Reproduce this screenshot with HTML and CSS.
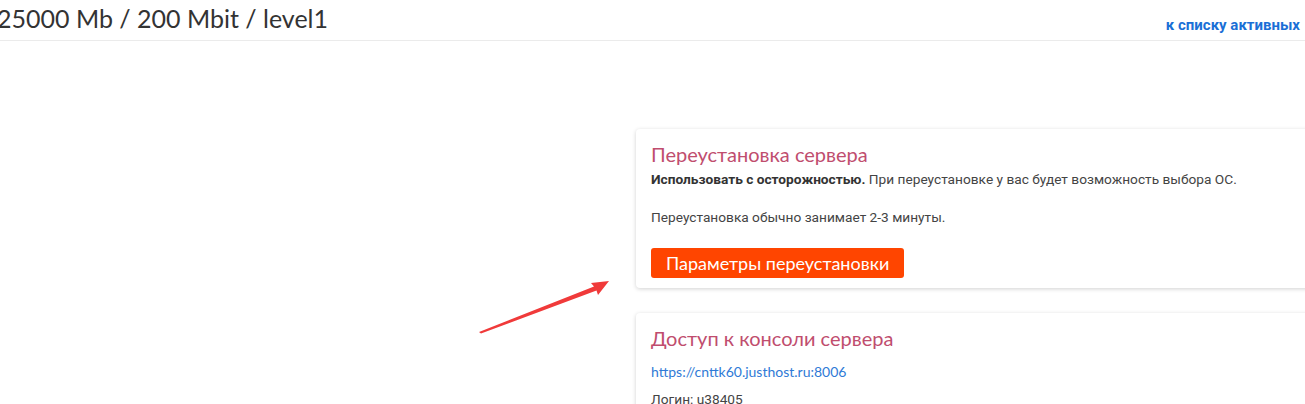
FILE: index.html
```html
<!DOCTYPE html>
<html lang="ru">
<head>
    <meta charset="UTF-8">
    <meta name="viewport" content="width=device-width, initial-scale=1.0">
    <title>25000 Mb / 200 Mbit / level1</title>
    <link rel="stylesheet" href="styles.css">
</head>
<body>
    <div class="page-header">
        <h1 class="page-title">25000 Mb / 200 Mbit / level1</h1>
        <a href="#" class="back-link">к списку активных</a>
    </div>

    <div class="content">
        <div class="side"></div>
        <div class="panels">
            <div class="panel">
                <h2 class="panel-title">Переустановка сервера</h2>
                <p class="panel-text"><b>Использовать с осторожностью.</b> При переустановке у вас будет возможность выбора ОС.<br><br>Переустановка обычно занимает 2-3 минуты.</p>
                <a href="#" class="btn-reinstall">Параметры переустановки</a>
            </div>
            <div class="panel">
                <h2 class="panel-title">Доступ к консоли сервера</h2>
                <a href="#" class="console-link">https://cnttk60.justhost.ru:8006</a>
                <p class="panel-text">Логин: u38405</p>
            </div>
        </div>
    </div>

    <!-- arrow drawn over the page -->
    <svg class="arrow" width="1305" height="404" viewBox="0 0 1305 404">
        <polygon points="479,332 594,286.5 591,283 609,281 598,295 596.5,290.5 481,333.5" fill="#f03a3a"/>
    </svg>
</body>
</html>
```

FILE: styles.css
```css
body {
    margin: 0;
    padding: 0;
    font-family: Roboto, "Liberation Sans", sans-serif;
    background: white;
    overflow: hidden;
    width: 1305px;
    height: 404px;
    position: relative;
}
.page-header {
    display: flex;
    justify-content: space-between;
    align-items: center;
    height: 40px;
    border-bottom: 1px solid #ebebeb;
    white-space: nowrap;
    overflow: hidden;
}
.page-title {
    margin: 0 0 4px -3px;
    font-family: Lato, sans-serif;
    font-weight: 400;
    font-size: 25px;
    color: #333;
}
.back-link {
    margin: 10px 5px 0 0;
    font-family: Roboto, sans-serif;
    font-weight: 700;
    font-size: 15px;
    color: #1a6fd6;
    text-decoration: none;
}
.content {
    display: flex;
    padding-top: 88px;
}
.side {
    width: 636px;
    flex-shrink: 0;
}
.panels {
    display: flex;
    flex-direction: column;
    gap: 25px;
}
.panel {
    width: 700px;
    padding: 13px 15px 10px;
    background: white;
    border-radius: 4px;
    box-shadow: 0 1px 4px rgba(0, 0, 0, 0.18);
    box-sizing: border-box;
}
.panel-title {
    margin: 0 0 4px;
    font-family: Lato, sans-serif;
    font-weight: 400;
    font-size: 20px;
    color: #c04d6e;
}
.panel-text {
    margin: 0 0 21px;
    font-size: 13.7px;
    line-height: 19px;
    color: #444;
}
.panel-text b {
    color: #333;
}
.btn-reinstall {
    display: inline-block;
    background: #ff4500;
    color: white;
    text-decoration: none;
    font-family: Lato, sans-serif;
    font-size: 18px;
    line-height: 30px;
    padding: 0 15px;
    border-radius: 3px;
}
.console-link {
    display: block;
    margin: 13px 0 10px;
    font-family: Lato, sans-serif;
    font-size: 14px;
    color: #2f7ad6;
    text-decoration: none;
}
.arrow {
    position: absolute;
    left: 0;
    top: 0;
    pointer-events: none;
}
```
